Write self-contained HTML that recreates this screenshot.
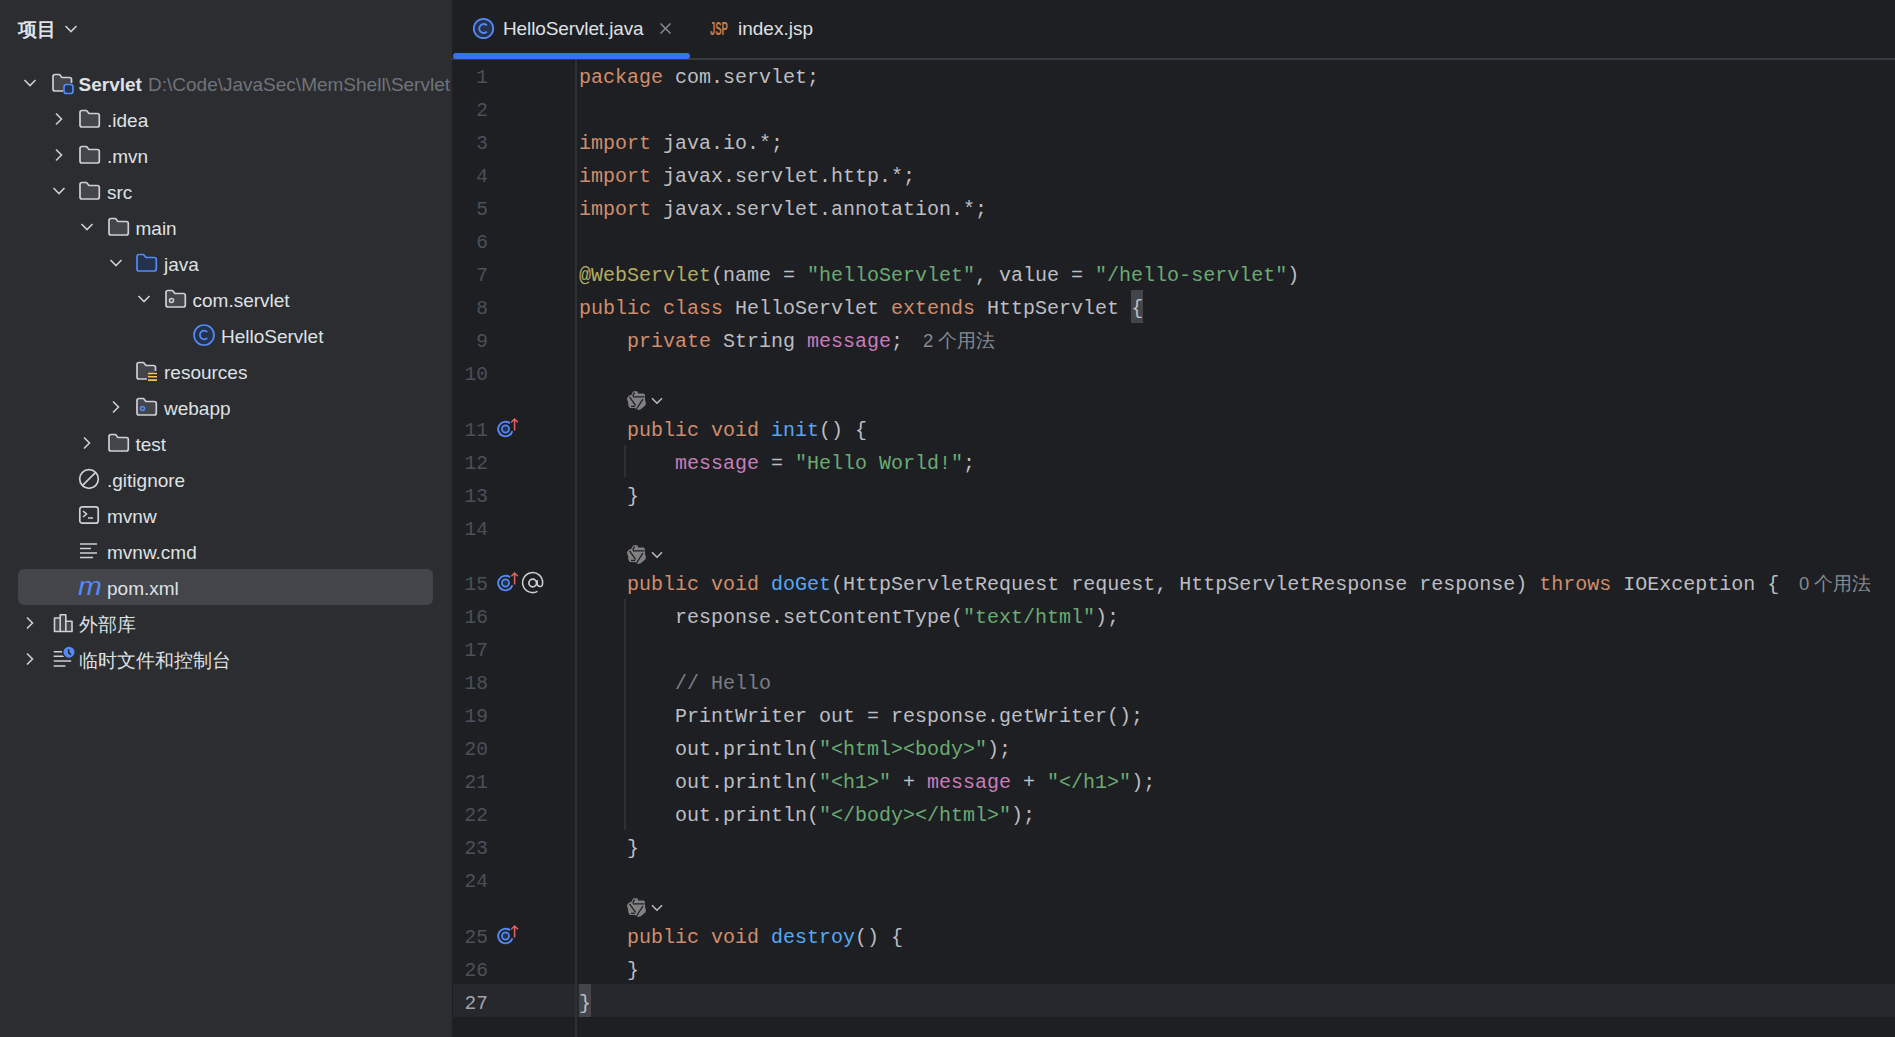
<!DOCTYPE html>
<html><head><meta charset="utf-8"><title>IDE</title><style>
html,body{margin:0;padding:0;background:#1E1F22;width:1895px;height:1037px;overflow:hidden}
body{position:relative}
.sidebar{position:absolute;left:0;top:0;width:452px;height:1037px;background:#2B2D30}
.editor{position:absolute;left:452px;top:0;width:1443px;height:1037px;background:#1E1F22}
.t{position:absolute;font-family:"Liberation Sans",sans-serif;font-size:19px;line-height:36px;height:36px;padding-top:2px;color:#DFE1E5;white-space:pre}
.hdr{font-weight:bold;font-size:19px;line-height:28px;height:28px}
.bold{font-weight:bold}
.ic{position:absolute;overflow:visible}
.sel{position:absolute;left:18px;width:415px;height:36px;border-radius:6px;background:#43454A}
.mvn{font-style:italic;color:#548AF7;font-size:26px;transform:scaleX(1.1);transform-origin:left center;font-family:"Liberation Sans",sans-serif}
.tabborder{position:absolute;left:452px;top:58px;width:1443px;height:2px;background:#393B40}
.tabul{position:absolute;left:453px;top:53px;width:237px;height:6px;border-radius:3px;background:#3574F0}
.tab{line-height:36px}
.jsp{color:#C57B4C;font-size:19px;font-weight:bold;transform:scaleX(0.5);transform-origin:left center}
.curline{position:absolute;left:453px;width:1442px;height:33px;background:#26282E}
.gdiv{position:absolute;left:575px;top:60px;width:2px;height:977px;background:#2E3034}
.bhl{position:absolute;width:12px;height:33px;background:#43454A}
.guide{position:absolute;left:624px;width:2px;background:#2E3034}
.ln{position:absolute;left:440px;width:48px;text-align:right;font-family:"Liberation Mono",monospace;font-size:19.5px;line-height:33px;height:33px;padding-top:2.5px;color:#4B5059}
.ln.cur{color:#A1A3AB}
.code{position:absolute;left:579px;padding-top:1.5px;font-family:"Liberation Mono",monospace;font-size:20px;line-height:33px;height:33px;color:#BCBEC4;white-space:pre}
.k{color:#CF8E6D} .s{color:#6AAB73} .a{color:#B3AE60} .f{color:#C77DBB} .m{color:#56A8F5} .c{color:#7A7E85}
.hint{color:#868A91;font-size:18.5px;line-height:33px;height:33px;padding-top:0.5px}
.at{font-size:24px;line-height:33px;height:33px;color:#DFE1E5}
</style></head>
<body>
<div class="sidebar"></div>
<div class="t hdr" style="left:18px;top:14px">项目</div>
<svg class="ic" style="left:64px;top:24px" width="14" height="10" viewBox="0 0 14 10"><path d="M1.5 2 L7 7.5 L12.5 2" fill="none" stroke="#CED0D6" stroke-width="1.6"/></svg>
<div class="sel" style="top:569px"></div>
<svg class="ic" style="left:23.0px;top:78px" width="14" height="10" viewBox="0 0 14 10"><path d="M1.5 2 L7 7.5 L12.5 2" fill="none" stroke="#CED0D6" stroke-width="1.6"/></svg>
<svg class="ic" style="left:50.5px;top:73px" width="24" height="22" viewBox="0 0 24 22"><path d="M12 18 L4 18 Q2 18 2 16 L2 3.5 Q2 1.5 4 1.5 L8.5 1.5 L11 4.5 L18.5 4.5 Q20.5 4.5 20.5 6.5 L20.5 10" fill="#43454A" stroke="#CED0D6" stroke-width="1.7" stroke-linejoin="round"/><rect x="13" y="11.5" width="9" height="9" rx="2.5" fill="#25324D" stroke="#548AF7" stroke-width="1.7"/></svg>
<div class="t bold" style="left:78.5px;top:65px">Servlet</div>
<div class="t" style="left:148px;top:65px;color:#6F737A">D:\Code\JavaSec\MemShell\Servlet</div>
<svg class="ic" style="left:53.5px;top:112px" width="10" height="14" viewBox="0 0 10 14"><path d="M2 1.5 L7.5 7 L2 12.5" fill="none" stroke="#CED0D6" stroke-width="1.6"/></svg>
<svg class="ic" style="left:78.0px;top:109px" width="23" height="20" viewBox="0 0 23 20"><path d="M2 3.5 Q2 1.5 4 1.5 L8.5 1.5 L11 4.5 L19.3 4.5 Q21.3 4.5 21.3 6.5 L21.3 16 Q21.3 18 19.3 18 L4 18 Q2 18 2 16 Z" fill="#43454A" stroke="#CED0D6" stroke-width="1.7" stroke-linejoin="round"/></svg>
<div class="t" style="left:107.0px;top:101px">.idea</div>
<svg class="ic" style="left:53.5px;top:148px" width="10" height="14" viewBox="0 0 10 14"><path d="M2 1.5 L7.5 7 L2 12.5" fill="none" stroke="#CED0D6" stroke-width="1.6"/></svg>
<svg class="ic" style="left:78.0px;top:145px" width="23" height="20" viewBox="0 0 23 20"><path d="M2 3.5 Q2 1.5 4 1.5 L8.5 1.5 L11 4.5 L19.3 4.5 Q21.3 4.5 21.3 6.5 L21.3 16 Q21.3 18 19.3 18 L4 18 Q2 18 2 16 Z" fill="#43454A" stroke="#CED0D6" stroke-width="1.7" stroke-linejoin="round"/></svg>
<div class="t" style="left:107.0px;top:137px">.mvn</div>
<svg class="ic" style="left:51.5px;top:186px" width="14" height="10" viewBox="0 0 14 10"><path d="M1.5 2 L7 7.5 L12.5 2" fill="none" stroke="#CED0D6" stroke-width="1.6"/></svg>
<svg class="ic" style="left:78.0px;top:181px" width="23" height="20" viewBox="0 0 23 20"><path d="M2 3.5 Q2 1.5 4 1.5 L8.5 1.5 L11 4.5 L19.3 4.5 Q21.3 4.5 21.3 6.5 L21.3 16 Q21.3 18 19.3 18 L4 18 Q2 18 2 16 Z" fill="#43454A" stroke="#CED0D6" stroke-width="1.7" stroke-linejoin="round"/></svg>
<div class="t" style="left:107.0px;top:173px">src</div>
<svg class="ic" style="left:80.0px;top:222px" width="14" height="10" viewBox="0 0 14 10"><path d="M1.5 2 L7 7.5 L12.5 2" fill="none" stroke="#CED0D6" stroke-width="1.6"/></svg>
<svg class="ic" style="left:106.5px;top:217px" width="23" height="20" viewBox="0 0 23 20"><path d="M2 3.5 Q2 1.5 4 1.5 L8.5 1.5 L11 4.5 L19.3 4.5 Q21.3 4.5 21.3 6.5 L21.3 16 Q21.3 18 19.3 18 L4 18 Q2 18 2 16 Z" fill="#43454A" stroke="#CED0D6" stroke-width="1.7" stroke-linejoin="round"/></svg>
<div class="t" style="left:135.5px;top:209px">main</div>
<svg class="ic" style="left:108.5px;top:258px" width="14" height="10" viewBox="0 0 14 10"><path d="M1.5 2 L7 7.5 L12.5 2" fill="none" stroke="#CED0D6" stroke-width="1.6"/></svg>
<svg class="ic" style="left:135.0px;top:253px" width="23" height="20" viewBox="0 0 23 20"><path d="M2 3.5 Q2 1.5 4 1.5 L8.5 1.5 L11 4.5 L19.3 4.5 Q21.3 4.5 21.3 6.5 L21.3 16 Q21.3 18 19.3 18 L4 18 Q2 18 2 16 Z" fill="#25324D" stroke="#548AF7" stroke-width="1.7" stroke-linejoin="round"/></svg>
<div class="t" style="left:164.0px;top:245px">java</div>
<svg class="ic" style="left:137.0px;top:294px" width="14" height="10" viewBox="0 0 14 10"><path d="M1.5 2 L7 7.5 L12.5 2" fill="none" stroke="#CED0D6" stroke-width="1.6"/></svg>
<svg class="ic" style="left:163.5px;top:289px" width="23" height="20" viewBox="0 0 23 20"><path d="M2 3.5 Q2 1.5 4 1.5 L8.5 1.5 L11 4.5 L19.3 4.5 Q21.3 4.5 21.3 6.5 L21.3 16 Q21.3 18 19.3 18 L4 18 Q2 18 2 16 Z" fill="#43454A" stroke="#CED0D6" stroke-width="1.7" stroke-linejoin="round"/><circle cx="7.5" cy="11.5" r="2" fill="none" stroke="#CED0D6" stroke-width="1.5"/></svg>
<div class="t" style="left:192.5px;top:281px">com.servlet</div>
<svg class="ic" style="left:193.0px;top:324px" width="22" height="22" viewBox="0 0 22 22"><circle cx="11" cy="11" r="10" fill="#25324D" stroke="#548AF7" stroke-width="1.7"/><path d="M14.3 8 A4.3 4.3 0 1 0 14.3 14" fill="none" stroke="#548AF7" stroke-width="1.7"/></svg>
<div class="t" style="left:221.0px;top:317px">HelloServlet</div>
<svg class="ic" style="left:135.0px;top:361px" width="24" height="22" viewBox="0 0 24 22"><path d="M12 18 L4 18 Q2 18 2 16 L2 3.5 Q2 1.5 4 1.5 L8.5 1.5 L11 4.5 L18.5 4.5 Q20.5 4.5 20.5 6.5 L20.5 10" fill="#43454A" stroke="#CED0D6" stroke-width="1.7" stroke-linejoin="round"/><path d="M13 12.5 H22 M13 15.8 H22 M13 19.1 H22" stroke="#F2C55C" stroke-width="1.6"/></svg>
<div class="t" style="left:164.0px;top:353px">resources</div>
<svg class="ic" style="left:110.5px;top:400px" width="10" height="14" viewBox="0 0 10 14"><path d="M2 1.5 L7.5 7 L2 12.5" fill="none" stroke="#CED0D6" stroke-width="1.6"/></svg>
<svg class="ic" style="left:135.0px;top:397px" width="23" height="20" viewBox="0 0 23 20"><path d="M2 3.5 Q2 1.5 4 1.5 L8.5 1.5 L11 4.5 L19.3 4.5 Q21.3 4.5 21.3 6.5 L21.3 16 Q21.3 18 19.3 18 L4 18 Q2 18 2 16 Z" fill="#43454A" stroke="#CED0D6" stroke-width="1.7" stroke-linejoin="round"/><circle cx="7.5" cy="11.5" r="2" fill="none" stroke="#548AF7" stroke-width="1.6"/></svg>
<div class="t" style="left:164.0px;top:389px">webapp</div>
<svg class="ic" style="left:82.0px;top:436px" width="10" height="14" viewBox="0 0 10 14"><path d="M2 1.5 L7.5 7 L2 12.5" fill="none" stroke="#CED0D6" stroke-width="1.6"/></svg>
<svg class="ic" style="left:106.5px;top:433px" width="23" height="20" viewBox="0 0 23 20"><path d="M2 3.5 Q2 1.5 4 1.5 L8.5 1.5 L11 4.5 L19.3 4.5 Q21.3 4.5 21.3 6.5 L21.3 16 Q21.3 18 19.3 18 L4 18 Q2 18 2 16 Z" fill="#43454A" stroke="#CED0D6" stroke-width="1.7" stroke-linejoin="round"/></svg>
<div class="t" style="left:135.5px;top:425px">test</div>
<svg class="ic" style="left:78.0px;top:468px" width="22" height="22" viewBox="0 0 22 22"><circle cx="11" cy="11" r="9.3" fill="none" stroke="#CED0D6" stroke-width="1.7"/><path d="M4.6 17.4 L17.4 4.6" stroke="#CED0D6" stroke-width="1.7"/></svg>
<div class="t" style="left:107.0px;top:461px">.gitignore</div>
<svg class="ic" style="left:78.0px;top:505px" width="22" height="20" viewBox="0 0 22 20"><rect x="1.8" y="1.8" width="18.4" height="16.4" rx="2.5" fill="none" stroke="#CED0D6" stroke-width="1.7"/><path d="M5 6 L8.5 9 L5 12 M10 13 H15" fill="none" stroke="#CED0D6" stroke-width="1.6"/></svg>
<div class="t" style="left:107.0px;top:497px">mvnw</div>
<svg class="ic" style="left:78.0px;top:541px" width="22" height="20" viewBox="0 0 22 20"><path d="M2 3 H19 M2 7.5 H13 M2 12 H19 M2 16.5 H15" stroke="#CED0D6" stroke-width="1.6"/></svg>
<div class="t" style="left:107.0px;top:533px">mvnw.cmd</div>
<div class="t mvn" style="left:78.0px;top:566px">m</div>
<div class="t" style="left:107.0px;top:569px">pom.xml</div>
<svg class="ic" style="left:25.0px;top:616px" width="10" height="14" viewBox="0 0 10 14"><path d="M2 1.5 L7.5 7 L2 12.5" fill="none" stroke="#CED0D6" stroke-width="1.6"/></svg>
<svg class="ic" style="left:49.5px;top:613px" width="24" height="20" viewBox="0 0 24 20"><path d="M4.5 18.5 V5 H10.2 V18.5 Z M10.2 18.5 V1.8 H15.8 V18.5 Z M15.8 18.5 V8.2 H22 V18.5 Z" fill="#43454A" stroke="#CED0D6" stroke-width="1.6" stroke-linejoin="round"/></svg>
<div class="t" style="left:78.5px;top:605px">外部库</div>
<svg class="ic" style="left:25.0px;top:652px" width="10" height="14" viewBox="0 0 10 14"><path d="M2 1.5 L7.5 7 L2 12.5" fill="none" stroke="#CED0D6" stroke-width="1.6"/></svg>
<svg class="ic" style="left:49.5px;top:647px" width="26" height="24" viewBox="0 0 26 24"><path d="M3.7 4.7 H12.2 M3.7 9.2 H14.3 M3.7 14 H21.2 M3.7 19 H15.4" stroke="#CED0D6" stroke-width="1.6"/><circle cx="19" cy="5.2" r="6.2" fill="#548AF7" stroke="#2B2D30" stroke-width="1.4"/><path d="M18.6 2.3 V5.6 L21 7.6" fill="none" stroke="#1E1F22" stroke-width="1.4"/></svg>
<div class="t" style="left:78.5px;top:641px">临时文件和控制台</div>
<div class="editor"></div>
<div class="tabborder"></div>
<div class="tabul"></div>
<svg class="ic" style="left:472px;top:17px" width="23" height="23" viewBox="0 0 22 22"><circle cx="11" cy="11" r="9.3" fill="#25324D" stroke="#548AF7" stroke-width="1.7"/><path d="M14.3 8 A4.3 4.3 0 1 0 14.3 14" fill="none" stroke="#548AF7" stroke-width="1.7"/></svg>
<div class="t tab" style="left:503px;top:9px;letter-spacing:-0.12px">HelloServlet.java</div>
<svg class="ic" style="left:659px;top:22px" width="13" height="13" viewBox="0 0 13 13"><path d="M1.5 1.5 L11.5 11.5 M11.5 1.5 L1.5 11.5" stroke="#868A91" stroke-width="1.5"/></svg>
<div class="t jsp" style="left:710px;top:8.5px">JSP</div>
<div class="t tab" style="left:738px;top:9px">index.jsp</div>
<div class="curline" style="top:984px"></div>
<div class="gdiv"></div>
<div class="bhl" style="left:1131px;top:290px"></div>
<div class="bhl" style="left:579px;top:984px"></div>
<div class="guide" style="top:445px;height:32px"></div>
<div class="guide" style="top:599px;height:231px"></div>
<div class="ln" style="top:59px">1</div>
<div class="code" style="top:59px"><span class="k">package</span> com.servlet;</div>
<div class="ln" style="top:92px">2</div>
<div class="ln" style="top:125px">3</div>
<div class="code" style="top:125px"><span class="k">import</span> java.io.*;</div>
<div class="ln" style="top:158px">4</div>
<div class="code" style="top:158px"><span class="k">import</span> javax.servlet.http.*;</div>
<div class="ln" style="top:191px">5</div>
<div class="code" style="top:191px"><span class="k">import</span> javax.servlet.annotation.*;</div>
<div class="ln" style="top:224px">6</div>
<div class="ln" style="top:257px">7</div>
<div class="code" style="top:257px"><span class="a">@WebServlet</span>(name = <span class="s">"helloServlet"</span>, value = <span class="s">"/hello-servlet"</span>)</div>
<div class="ln" style="top:290px">8</div>
<div class="code" style="top:290px"><span class="k">public</span> <span class="k">class</span> HelloServlet <span class="k">extends</span> HttpServlet <span class="b">{</span></div>
<div class="ln" style="top:323px">9</div>
<div class="code" style="top:323px">    <span class="k">private</span> String <span class="f">message</span>;</div>
<div class="ln" style="top:356px">10</div>
<div class="ln" style="top:412px">11</div>
<div class="code" style="top:412px">    <span class="k">public</span> <span class="k">void</span> <span class="m">init</span>() {</div>
<div class="ln" style="top:445px">12</div>
<div class="code" style="top:445px">        <span class="f">message</span> = <span class="s">"Hello World!"</span>;</div>
<div class="ln" style="top:478px">13</div>
<div class="code" style="top:478px">    }</div>
<div class="ln" style="top:511px">14</div>
<div class="ln" style="top:566px">15</div>
<div class="code" style="top:566px">    <span class="k">public</span> <span class="k">void</span> <span class="m">doGet</span>(HttpServletRequest request, HttpServletResponse response) <span class="k">throws</span> IOException {</div>
<div class="ln" style="top:599px">16</div>
<div class="code" style="top:599px">        response.setContentType(<span class="s">"text/html"</span>);</div>
<div class="ln" style="top:632px">17</div>
<div class="ln" style="top:665px">18</div>
<div class="code" style="top:665px">        <span class="c">// Hello</span></div>
<div class="ln" style="top:698px">19</div>
<div class="code" style="top:698px">        PrintWriter out = response.getWriter();</div>
<div class="ln" style="top:731px">20</div>
<div class="code" style="top:731px">        out.println(<span class="s">"&lt;html&gt;&lt;body&gt;"</span>);</div>
<div class="ln" style="top:764px">21</div>
<div class="code" style="top:764px">        out.println(<span class="s">"&lt;h1&gt;"</span> + <span class="f">message</span> + <span class="s">"&lt;/h1&gt;"</span>);</div>
<div class="ln" style="top:797px">22</div>
<div class="code" style="top:797px">        out.println(<span class="s">"&lt;/body&gt;&lt;/html&gt;"</span>);</div>
<div class="ln" style="top:830px">23</div>
<div class="code" style="top:830px">    }</div>
<div class="ln" style="top:863px">24</div>
<div class="ln" style="top:919px">25</div>
<div class="code" style="top:919px">    <span class="k">public</span> <span class="k">void</span> <span class="m">destroy</span>() {</div>
<div class="ln" style="top:952px">26</div>
<div class="code" style="top:952px">    }</div>
<div class="ln cur" style="top:985px">27</div>
<div class="code" style="top:985px"><span class="b">}</span></div>
<div class="t hint" style="left:923px;top:323px">2 个用法</div>
<div class="t hint" style="left:1799px;top:566px">0 个用法</div>
<svg class="ic" style="left:626px;top:390px" width="22" height="22" viewBox="0 0 22 22"><path d="M7.2 1.2 L11.4 1.2 L12.2 3.4 L17.7 3.4 L18.9 4.8 L19.2 11.2 L20 12.4 L19.5 15.3 L14.8 19.3 L12.5 19.9 L9.6 18.7 L9 17.9 L3.8 17.9 L2.4 15.8 L2.1 12.4 L0.9 8.6 L2.4 6 L5.6 4.5 Z" fill="#808080"/><path d="M7 6.9 H18.5 M8.5 2.5 L6.7 6.3 M3.5 6.9 L9.6 15.3 M16.9 9.2 L10.5 19 M5 16.4 H9" fill="none" stroke="#1E1F22" stroke-width="1.3"/></svg><svg class="ic" style="left:651px;top:397px" width="12" height="8" viewBox="0 0 12 8"><path d="M1 1.2 L6 6.2 L11 1.2" fill="none" stroke="#BCBEC4" stroke-width="1.5"/></svg>
<svg class="ic" style="left:626px;top:544px" width="22" height="22" viewBox="0 0 22 22"><path d="M7.2 1.2 L11.4 1.2 L12.2 3.4 L17.7 3.4 L18.9 4.8 L19.2 11.2 L20 12.4 L19.5 15.3 L14.8 19.3 L12.5 19.9 L9.6 18.7 L9 17.9 L3.8 17.9 L2.4 15.8 L2.1 12.4 L0.9 8.6 L2.4 6 L5.6 4.5 Z" fill="#808080"/><path d="M7 6.9 H18.5 M8.5 2.5 L6.7 6.3 M3.5 6.9 L9.6 15.3 M16.9 9.2 L10.5 19 M5 16.4 H9" fill="none" stroke="#1E1F22" stroke-width="1.3"/></svg><svg class="ic" style="left:651px;top:551px" width="12" height="8" viewBox="0 0 12 8"><path d="M1 1.2 L6 6.2 L11 1.2" fill="none" stroke="#BCBEC4" stroke-width="1.5"/></svg>
<svg class="ic" style="left:626px;top:897px" width="22" height="22" viewBox="0 0 22 22"><path d="M7.2 1.2 L11.4 1.2 L12.2 3.4 L17.7 3.4 L18.9 4.8 L19.2 11.2 L20 12.4 L19.5 15.3 L14.8 19.3 L12.5 19.9 L9.6 18.7 L9 17.9 L3.8 17.9 L2.4 15.8 L2.1 12.4 L0.9 8.6 L2.4 6 L5.6 4.5 Z" fill="#808080"/><path d="M7 6.9 H18.5 M8.5 2.5 L6.7 6.3 M3.5 6.9 L9.6 15.3 M16.9 9.2 L10.5 19 M5 16.4 H9" fill="none" stroke="#1E1F22" stroke-width="1.3"/></svg><svg class="ic" style="left:651px;top:904px" width="12" height="8" viewBox="0 0 12 8"><path d="M1 1.2 L6 6.2 L11 1.2" fill="none" stroke="#BCBEC4" stroke-width="1.5"/></svg>
<svg class="ic" style="left:496.5px;top:415.5px" width="24" height="24" viewBox="0 0 24 24"><path d="M15.44 15.26 A7.3 7.3 0 1 1 12.99 7.25" fill="none" stroke="#548AF7" stroke-width="1.9"/><circle cx="8.5" cy="13" r="3.6" fill="#25324D" stroke="#548AF7" stroke-width="1.7"/><path d="M17.6 14.5 V3 M14.3 6.3 L17.6 3 L20.9 6.3" fill="none" stroke="#E06262" stroke-width="1.5"/></svg>
<svg class="ic" style="left:496.5px;top:569.5px" width="24" height="24" viewBox="0 0 24 24"><path d="M15.44 15.26 A7.3 7.3 0 1 1 12.99 7.25" fill="none" stroke="#548AF7" stroke-width="1.9"/><circle cx="8.5" cy="13" r="3.6" fill="#25324D" stroke="#548AF7" stroke-width="1.7"/><path d="M17.6 14.5 V3 M14.3 6.3 L17.6 3 L20.9 6.3" fill="none" stroke="#E06262" stroke-width="1.5"/></svg>
<svg class="ic" style="left:496.5px;top:922.5px" width="24" height="24" viewBox="0 0 24 24"><path d="M15.44 15.26 A7.3 7.3 0 1 1 12.99 7.25" fill="none" stroke="#548AF7" stroke-width="1.9"/><circle cx="8.5" cy="13" r="3.6" fill="#25324D" stroke="#548AF7" stroke-width="1.7"/><path d="M17.6 14.5 V3 M14.3 6.3 L17.6 3 L20.9 6.3" fill="none" stroke="#E06262" stroke-width="1.5"/></svg>
<svg class="ic" style="left:521px;top:571px" width="24" height="24" viewBox="0 0 24 24"><path d="M16.5 20.3 A10 10 0 1 1 21.6 12 Q21.6 15.6 19 15.6 Q16.2 15.6 16.2 12.6 V9" fill="none" stroke="#CED0D6" stroke-width="1.5"/><circle cx="11.7" cy="12" r="3.8" fill="none" stroke="#CED0D6" stroke-width="1.7"/></svg>
</body></html>
